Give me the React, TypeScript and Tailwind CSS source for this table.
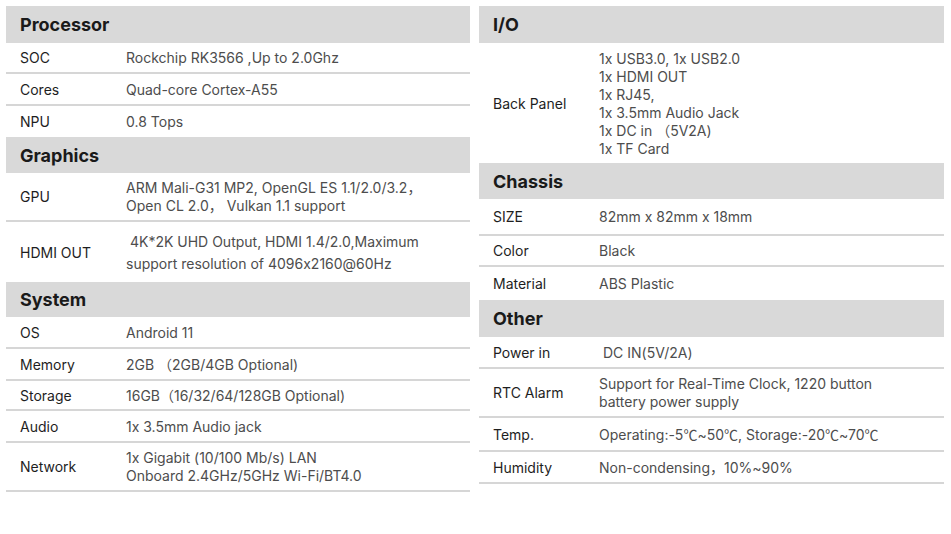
type Row = { label: string; lines: string[]; h: string; border?: boolean; lh?: string; indent?: boolean };
type Section = { title: string; h: string; rows: Row[] };

const left: Section[] = [
  {
    title: "Processor",
    h: "h-[37px]",
    rows: [
      { label: "SOC", lines: ["Rockchip RK3566 ,Up to 2.0Ghz"], h: "h-[31px]", border: true },
      { label: "Cores", lines: ["Quad-core Cortex-A55"], h: "h-[32px]", border: true },
      { label: "NPU", lines: ["0.8 Tops"], h: "h-[31px]" },
    ],
  },
  {
    title: "Graphics",
    h: "h-[36px]",
    rows: [
      {
        label: "GPU",
        lines: ["ARM Mali-G31 MP2, OpenGL ES 1.1/2.0/3.2，", "Open CL 2.0， Vulkan 1.1 support"],
        h: "h-[49px]",
        border: true,
      },
      {
        label: "HDMI OUT",
        lines: ["\u00a04K*2K UHD Output, HDMI 1.4/2.0,Maximum", "support resolution of 4096x2160@60Hz"],
        h: "h-[60px]",
        lh: "leading-[22px]",
      },
    ],
  },
  {
    title: "System",
    h: "h-[35px]",
    rows: [
      { label: "OS", lines: ["Android 11"], h: "h-[32px]", border: true },
      { label: "Memory", lines: ["2GB （2GB/4GB Optional)"], h: "h-[32px]", border: true },
      { label: "Storage", lines: ["16GB（16/32/64/128GB Optional)"], h: "h-[30px]", border: true },
      { label: "Audio", lines: ["1x 3.5mm Audio jack"], h: "h-[32px]", border: true },
      {
        label: "Network",
        lines: ["1x Gigabit (10/100 Mb/s) LAN", "Onboard 2.4GHz/5GHz Wi-Fi/BT4.0"],
        h: "h-[49px]",
        border: true,
      },
    ],
  },
];

const right: Section[] = [
  {
    title: "I/O",
    h: "h-[37px]",
    rows: [
      {
        label: "Back Panel",
        lines: [
          "1x USB3.0, 1x USB2.0",
          "1x HDMI OUT",
          "1x RJ45,",
          "1x 3.5mm Audio Jack",
          "1x DC in （5V2A)",
          "1x TF Card",
        ],
        h: "h-[120px]",
      },
    ],
  },
  {
    title: "Chassis",
    h: "h-[36px]",
    rows: [
      { label: "SIZE", lines: ["82mm x 82mm x 18mm"], h: "h-[37px]", border: true },
      { label: "Color", lines: ["Black"], h: "h-[31px]", border: true },
      { label: "Material", lines: ["ABS Plastic"], h: "h-[33px]" },
    ],
  },
  {
    title: "Other",
    h: "h-[37px]",
    rows: [
      { label: "Power in", lines: ["DC IN(5V/2A)"], h: "h-[32px]", border: true, indent: true },
      {
        label: "RTC Alarm",
        lines: ["Support for Real-Time Clock, 1220 button", "battery power supply"],
        h: "h-[49px]",
        border: true,
      },
      { label: "Temp.", lines: ["Operating:-5℃~50℃, Storage:-20℃~70℃"], h: "h-[34px]", border: true },
      { label: "Humidity", lines: ["Non-condensing，10%~90%"], h: "h-[32px]", border: true },
    ],
  },
];

// degree-celsius signs come out full width in the original
function Line({ text }: { text: string }) {
  const parts = text.split("℃");
  return (
    <div className="whitespace-pre">
      {parts.map((p, i) => (
        <span key={i}>
          {p}
          {i < parts.length - 1 && (
            <span style={{ fontFamily: '"Noto Sans CJK SC", sans-serif' }}>℃</span>
          )}
        </span>
      ))}
    </div>
  );
}

function SpecRow({ row }: { row: Row }) {
  return (
    <div
      className={`flex items-center ${row.h} ${row.border ? "border-b-2 border-[#d6d6d6]" : ""}`}
    >
      <div className="w-[120px] shrink-0 pl-[14px] text-[14px] text-[#1e1e1e]">{row.label}</div>
      <div
        className={`pt-px text-[14px] text-[#4d4d4d] ${row.lh ?? "leading-[18px]"} ${row.indent ? "pl-[4px]" : ""}`}
      >
        {row.lines.map((l, i) => (
          <Line key={i} text={l} />
        ))}
      </div>
    </div>
  );
}

function Column({ sections }: { sections: Section[] }) {
  return (
    <div className="flex-1 flex flex-col">
      {sections.map((s) => (
        <div key={s.title}>
          <div className={`${s.h} bg-[#d9d9d9] flex items-center pl-[14px]`}>
            <span className="text-[18px] font-bold text-[#1a1a1a]">{s.title}</span>
          </div>
          {s.rows.map((r) => (
            <SpecRow key={r.label} row={r} />
          ))}
        </div>
      ))}
    </div>
  );
}

export default function App() {
  return (
    <div
      className="w-[951px] h-[534px] bg-white pt-[6px] pl-[6px] pr-[7px] flex gap-[9px] [font-feature-settings:'calt'_0]"
      style={{ fontFamily: 'Inter, "Noto Sans CJK SC", sans-serif' }}
    >
      <div className="w-[464px] flex">
        <Column sections={left} />
      </div>
      <div className="flex-1 flex">
        <Column sections={right} />
      </div>
    </div>
  );
}
